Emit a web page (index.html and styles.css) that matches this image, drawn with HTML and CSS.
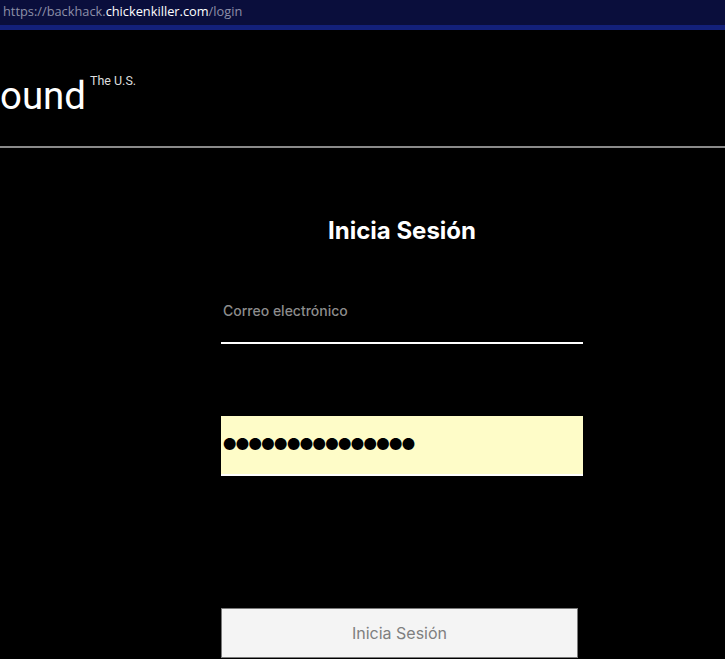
FILE: index.html
```html
<!DOCTYPE html>
<html lang="es">
<head>
<meta charset="utf-8">
<title>Login</title>
<link rel="stylesheet" href="styles.css">
</head>
<body>
<div class="urlbar">
  <span class="url"><span class="dim">https://backhack.</span><span class="host">chickenkiller.com</span><span class="dim">/login</span></span>
</div>
<div class="urlstrip"></div>
<header class="site-header">
  <div class="brand"><span class="brand-name">ound</span><sup class="brand-sup">The U.S.</sup></div>
</header>
<main class="main">
  <form class="login">
    <h1 class="title">Inicia Sesión</h1>
    <div class="field">
      <input class="input email" type="email" placeholder="Correo electrónico">
    </div>
    <div class="field">
      <input class="input password" type="password" value="xxxxxxxxxxxxxxx">
    </div>
    <button class="submit" type="button">Inicia Sesión</button>
  </form>
</main>
</body>
</html>
```
FILE: styles.css
```css
html, body {
  margin: 0;
  padding: 0;
  background: #000;
  height: 100%;
  overflow: hidden;
}
body {
  font-family: "Inter", "Liberation Sans", sans-serif;
  color: #fff;
}
.urlbar {
  height: 25px;
  background: #0a0e3c;
  display: flex;
  align-items: center;
  padding-left: 3px;
}
.url {
  font-family: "Open Sans", "Noto Sans", sans-serif;
  font-size: 12.8px;
  line-height: 1;
  margin-top: -3px;
}
.dim { color: #8d90a8; }
.host { color: #fff; }
.urlstrip {
  height: 5px;
  background: #13207a;
}
.site-header {
  height: 118px;
  border-bottom: 2px solid #8a8a8a;
  box-sizing: border-box;
  display: flex;
  align-items: flex-start;
}
.brand {
  display: flex;
  align-items: flex-start;
  padding-top: 43px;
}
.brand-name {
  font-family: "Roboto", "Liberation Sans", sans-serif;
  font-size: 38.4px;
  line-height: 45px;
  color: #fff;
}
.brand-sup {
  font-family: "Roboto", "Liberation Sans", sans-serif;
  font-size: 12.5px;
  line-height: 14px;
  margin-left: 4px;
  margin-top: 1px;
  color: #ddd;
  vertical-align: top;
}
.main {
  display: flex;
  justify-content: center;
  padding-left: 79px;
}
.login {
  width: 362px;
  display: flex;
  flex-direction: column;
  padding-top: 69px;
}
.title {
  margin: 0;
  text-align: center;
  font-size: 24px;
  font-weight: 700;
  line-height: 28px;
}
.field {
  margin-top: 39px;
}
.field + .field {
  margin-top: 72px;
}
.input {
  display: block;
  width: 100%;
  box-sizing: border-box;
  border: 0;
  border-bottom: 2px solid #fff;
  outline: none;
  font-family: "Inter", sans-serif;
  height: 60px;
  padding: 0 2px;
}
.email {
  background: transparent;
  font-size: 14px;
  font-weight: 500;
  color: #fff;
  padding-bottom: 6px;
}
.email::placeholder {
  color: #8c8c8c;
  opacity: 1;
}
.password {
  background: #fefcc8;
  color: #000;
  font-size: 38px;
  letter-spacing: -8.6px;
  padding-left: 0;
  text-indent: -2px;
  padding-bottom: 8px;
}
.submit {
  margin-top: 132px;
  width: 357px;
  height: 50px;
  background: #f4f4f4;
  border: 1px solid #7a7a7a;
  color: #7f7f7f;
  font-family: "Inter", sans-serif;
  font-size: 16px;
  cursor: pointer;
}
```
